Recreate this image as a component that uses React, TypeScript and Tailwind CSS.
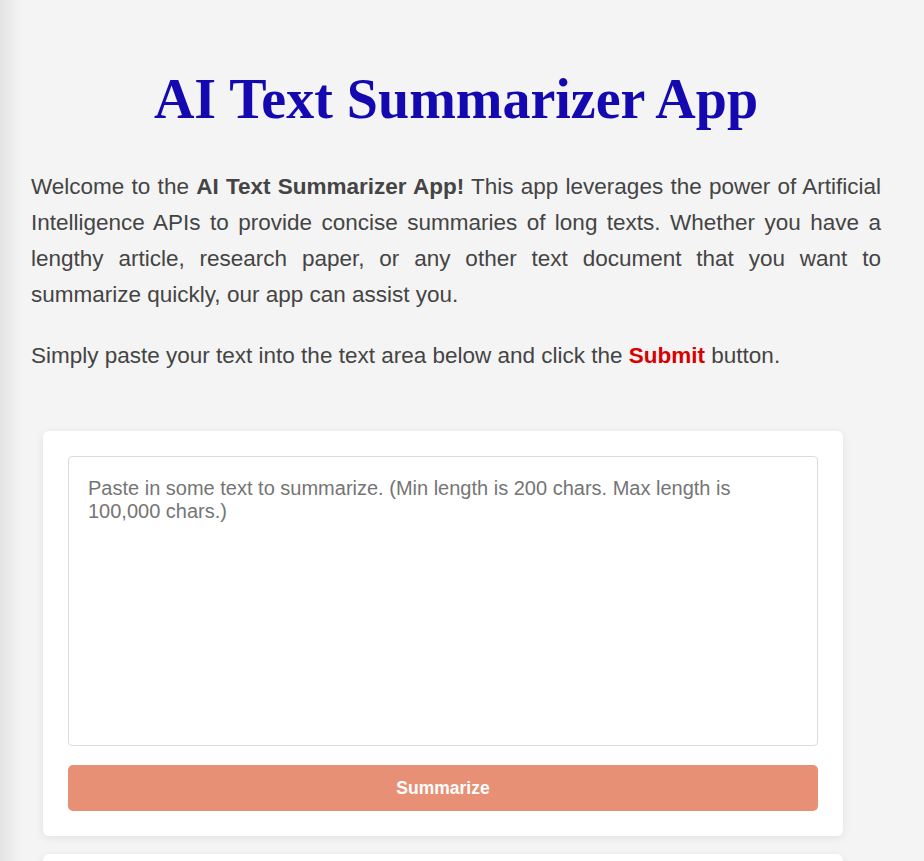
export default function App() {
  return (
    <div className="flex min-h-[861px] bg-[#f4f4f4] font-['Liberation_Sans',Arial,sans-serif]">
      <div className="w-[22px] shrink-0 bg-gradient-to-r from-[#e4e4e4] to-[#f4f4f4]" />
      <div className="flex-1 pl-[9px] pr-[43px] pt-[63px]">
        <h1 className="text-center font-['Liberation_Serif',serif] text-[56px] font-bold leading-[72px] text-[#1409b0]">
          AI Text Summarizer App
        </h1>
        <p className="mt-[34px] text-justify text-[22.5px] leading-[36px] text-[#444]">
          Welcome to the <strong>AI Text Summarizer App!</strong> This app leverages the power of
          Artificial Intelligence APIs to provide concise summaries of long texts. Whether you have a
          lengthy article, research paper, or any other text document that you want to summarize
          quickly, our app can assist you.
        </p>
        <p className="mt-[25px] text-[22.5px] leading-[36px] text-[#444]">
          Simply paste your text into the text area below and click the{' '}
          <strong className="text-[#d90000]">Submit</strong> button.
        </p>
        <div className="ml-[12px] mt-[57px] flex w-[800px] flex-col gap-[19px] rounded-md bg-white p-[25px] shadow-[0_2px_8px_rgba(0,0,0,0.08)]">
          <textarea
            className="h-[290px] w-full resize-none rounded border border-[#dcdcdc] px-[19px] py-[20px] text-[20px] leading-[23px] text-[#333] outline-none placeholder:text-[#757575]"
            placeholder="Paste in some text to summarize. (Min length is 200 chars. Max length is 100,000 chars.)"
          />
          <button className="h-[46px] w-full rounded-[5px] bg-[#e89075] text-[17.5px] font-bold text-white">
            Summarize
          </button>
        </div>
        <div className="ml-[12px] mt-[18px] h-[40px] w-[800px] rounded-md bg-white shadow-[0_2px_8px_rgba(0,0,0,0.08)]" />
      </div>
    </div>
  );
}
